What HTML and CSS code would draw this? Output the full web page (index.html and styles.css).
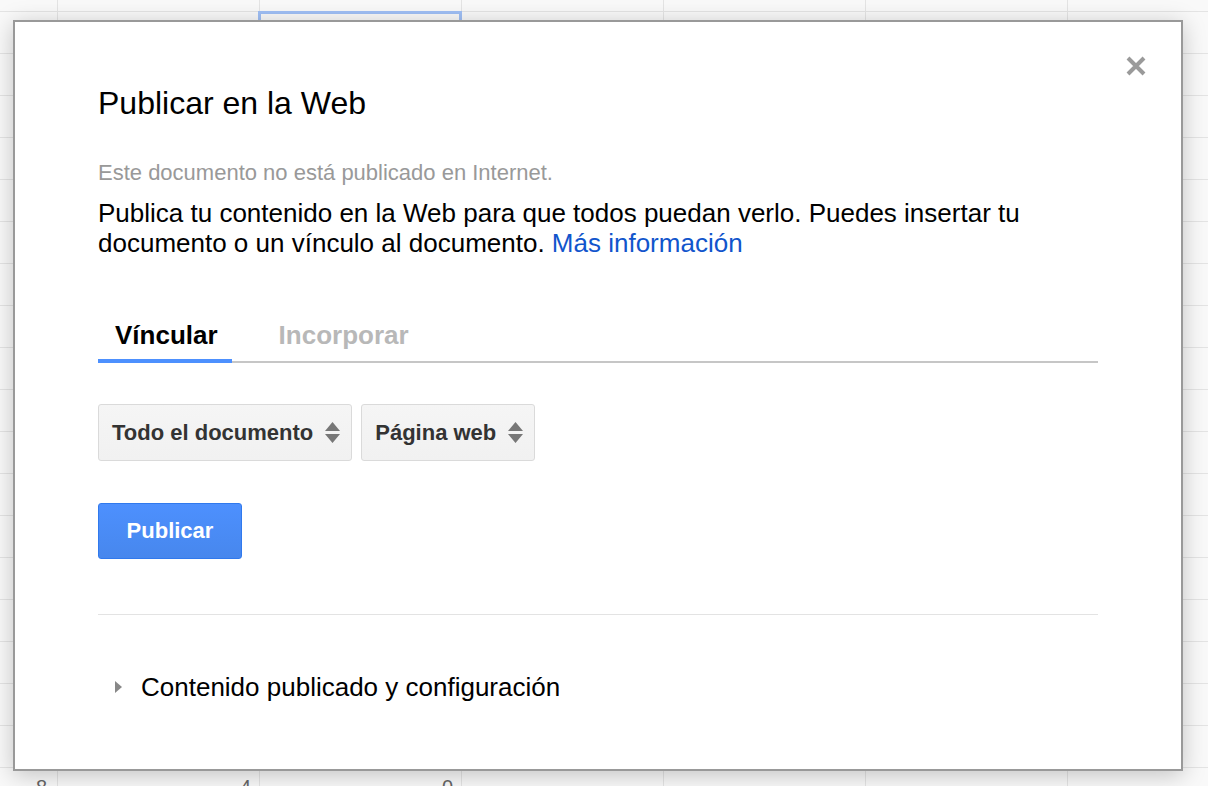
FILE: index.html
```html
<!DOCTYPE html>
<html lang="es">
<head>
<meta charset="utf-8">
<title>Publicar en la Web</title>
<link rel="stylesheet" href="styles.css">
</head>
<body>
<div class="sheet">
  <div class="sheet-row">
    <span class="cell cell-first">8</span>
    <span class="cell">4</span>
    <span class="cell">0</span>
  </div>
</div>
<div class="selection"></div>

<div class="dialog" role="dialog">
  <button class="close" aria-label="Cerrar">
    <svg width="22" height="22" viewBox="0 0 22 22"><path d="M3 3 L19 19 M19 3 L3 19" stroke="#9a9a9a" stroke-width="4" stroke-linecap="butt"/></svg>
  </button>
  <h1 class="title">Publicar en la Web</h1>
  <p class="status">Este documento no está publicado en Internet.</p>
  <p class="intro">Publica tu contenido en la Web para que todos puedan verlo. Puedes insertar tu documento o un vínculo al documento. <a class="link" href="#">Más información</a></p>

  <div class="tabs">
    <div class="tab tab-active">Víncular</div>
    <div class="tab">Incorporar</div>
  </div>

  <div class="selects">
    <div class="select">
      <span>Todo el documento</span>
      <svg class="arrows" width="15" height="21" viewBox="0 0 15 21"><path d="M7.5 0 L15 9 L0 9 Z M0 12 L15 12 L7.5 21 Z" fill="#777"/></svg>
    </div>
    <div class="select">
      <span>Página web</span>
      <svg class="arrows" width="15" height="21" viewBox="0 0 15 21"><path d="M7.5 0 L15 9 L0 9 Z M0 12 L15 12 L7.5 21 Z" fill="#777"/></svg>
    </div>
  </div>

  <button class="publish">Publicar</button>

  <div class="separator"></div>

  <div class="disclosure">
    <svg class="caret" width="7" height="12" viewBox="0 0 7 12"><path d="M0 0 L7 6 L0 12 Z" fill="#888"/></svg>
    <span>Contenido publicado y configuración</span>
  </div>
</div>
</body>
</html>
```

FILE: styles.css
```css
html, body {
  margin: 0;
  padding: 0;
}
body {
  width: 1208px;
  height: 786px;
  overflow: hidden;
  position: relative;
  font-family: "Liberation Sans", Arial, sans-serif;
}

.sheet {
  height: 786px;
  box-sizing: border-box;
  padding-top: 766px;
  background-color: #f9f9f9;
  background-image:
    linear-gradient(to right, #e4e4e4 1px, transparent 1px),
    linear-gradient(to bottom, #e4e4e4 1px, transparent 1px);
  background-size: 202px 100%, 100% 42px;
  background-position: 57px 0, 0 11px;
}
.sheet-row {
  display: grid;
  grid-template-columns: 57px 202px 202px;
  height: 42px;
  line-height: 42px;
  font-size: 20px;
  color: #666;
}
.cell {
  text-align: right;
  padding-right: 8px;
}
.cell-first {
  padding-right: 10px;
}

.selection {
  position: absolute;
  left: 258px;
  top: 11px;
  width: 204px;
  height: 43px;
  box-sizing: border-box;
  border: 3px solid #9fbff5;
}

.dialog {
  position: absolute;
  left: 13px;
  top: 20px;
  width: 1170px;
  height: 751px;
  box-sizing: border-box;
  background: #fff;
  border: 2px solid #999;
  box-shadow: 0 4px 22px rgba(0, 0, 0, 0.22);
  padding: 62px 83px 0;
}

.close {
  position: absolute;
  top: 33px;
  right: 34px;
  width: 22px;
  height: 22px;
  padding: 0;
  border: 0;
  background: none;
  cursor: pointer;
}
.close svg {
  display: block;
}

.title {
  margin: 0;
  font-size: 32px;
  line-height: 38px;
  font-weight: normal;
  color: #000;
}
.status {
  margin: 38px 0 0;
  font-size: 22px;
  line-height: 26px;
  color: #999;
}
.intro {
  margin: 12px 0 0;
  font-size: 26px;
  line-height: 30px;
  color: #000;
}
.link {
  color: #15c;
  text-decoration: none;
}

.tabs {
  display: flex;
  gap: 30px;
  margin-top: 62px;
  border-bottom: 2px solid #c6c6c6;
}
.tab {
  font-size: 26px;
  line-height: 30px;
  font-weight: bold;
  color: #b8b8b8;
  padding: 0 14px 9px 17px;
  border-bottom: 4px solid transparent;
  margin-bottom: -2px;
}
.tab-active {
  color: #000;
  border-bottom-color: #4d90fe;
}

.selects {
  display: flex;
  gap: 9px;
  margin-top: 41px;
}
.select {
  display: flex;
  align-items: center;
  gap: 12px;
  height: 57px;
  box-sizing: border-box;
  padding: 0 11px 0 13px;
  border: 1px solid #dadada;
  border-radius: 3px;
  background: linear-gradient(#f5f5f5, #f1f1f1);
  font-size: 22px;
  line-height: 55px;
  font-weight: bold;
  color: #333;
}
.arrows {
  display: block;
  flex: none;
}

.publish {
  display: block;
  margin-top: 42px;
  width: 144px;
  height: 56px;
  padding: 0;
  border: 1px solid #3079ed;
  border-radius: 3px;
  background: linear-gradient(#4d90fe, #4787ed);
  color: #fff;
  font-family: "Liberation Sans", Arial, sans-serif;
  font-size: 22px;
  font-weight: bold;
  line-height: 54px;
}

.separator {
  margin-top: 55px;
  height: 1px;
  background: #e3e3e3;
}

.disclosure {
  display: flex;
  align-items: center;
  gap: 19px;
  margin-top: 57px;
  padding-left: 17px;
  font-size: 26px;
  line-height: 30px;
  color: #000;
}
.caret {
  display: block;
  flex: none;
}
```
